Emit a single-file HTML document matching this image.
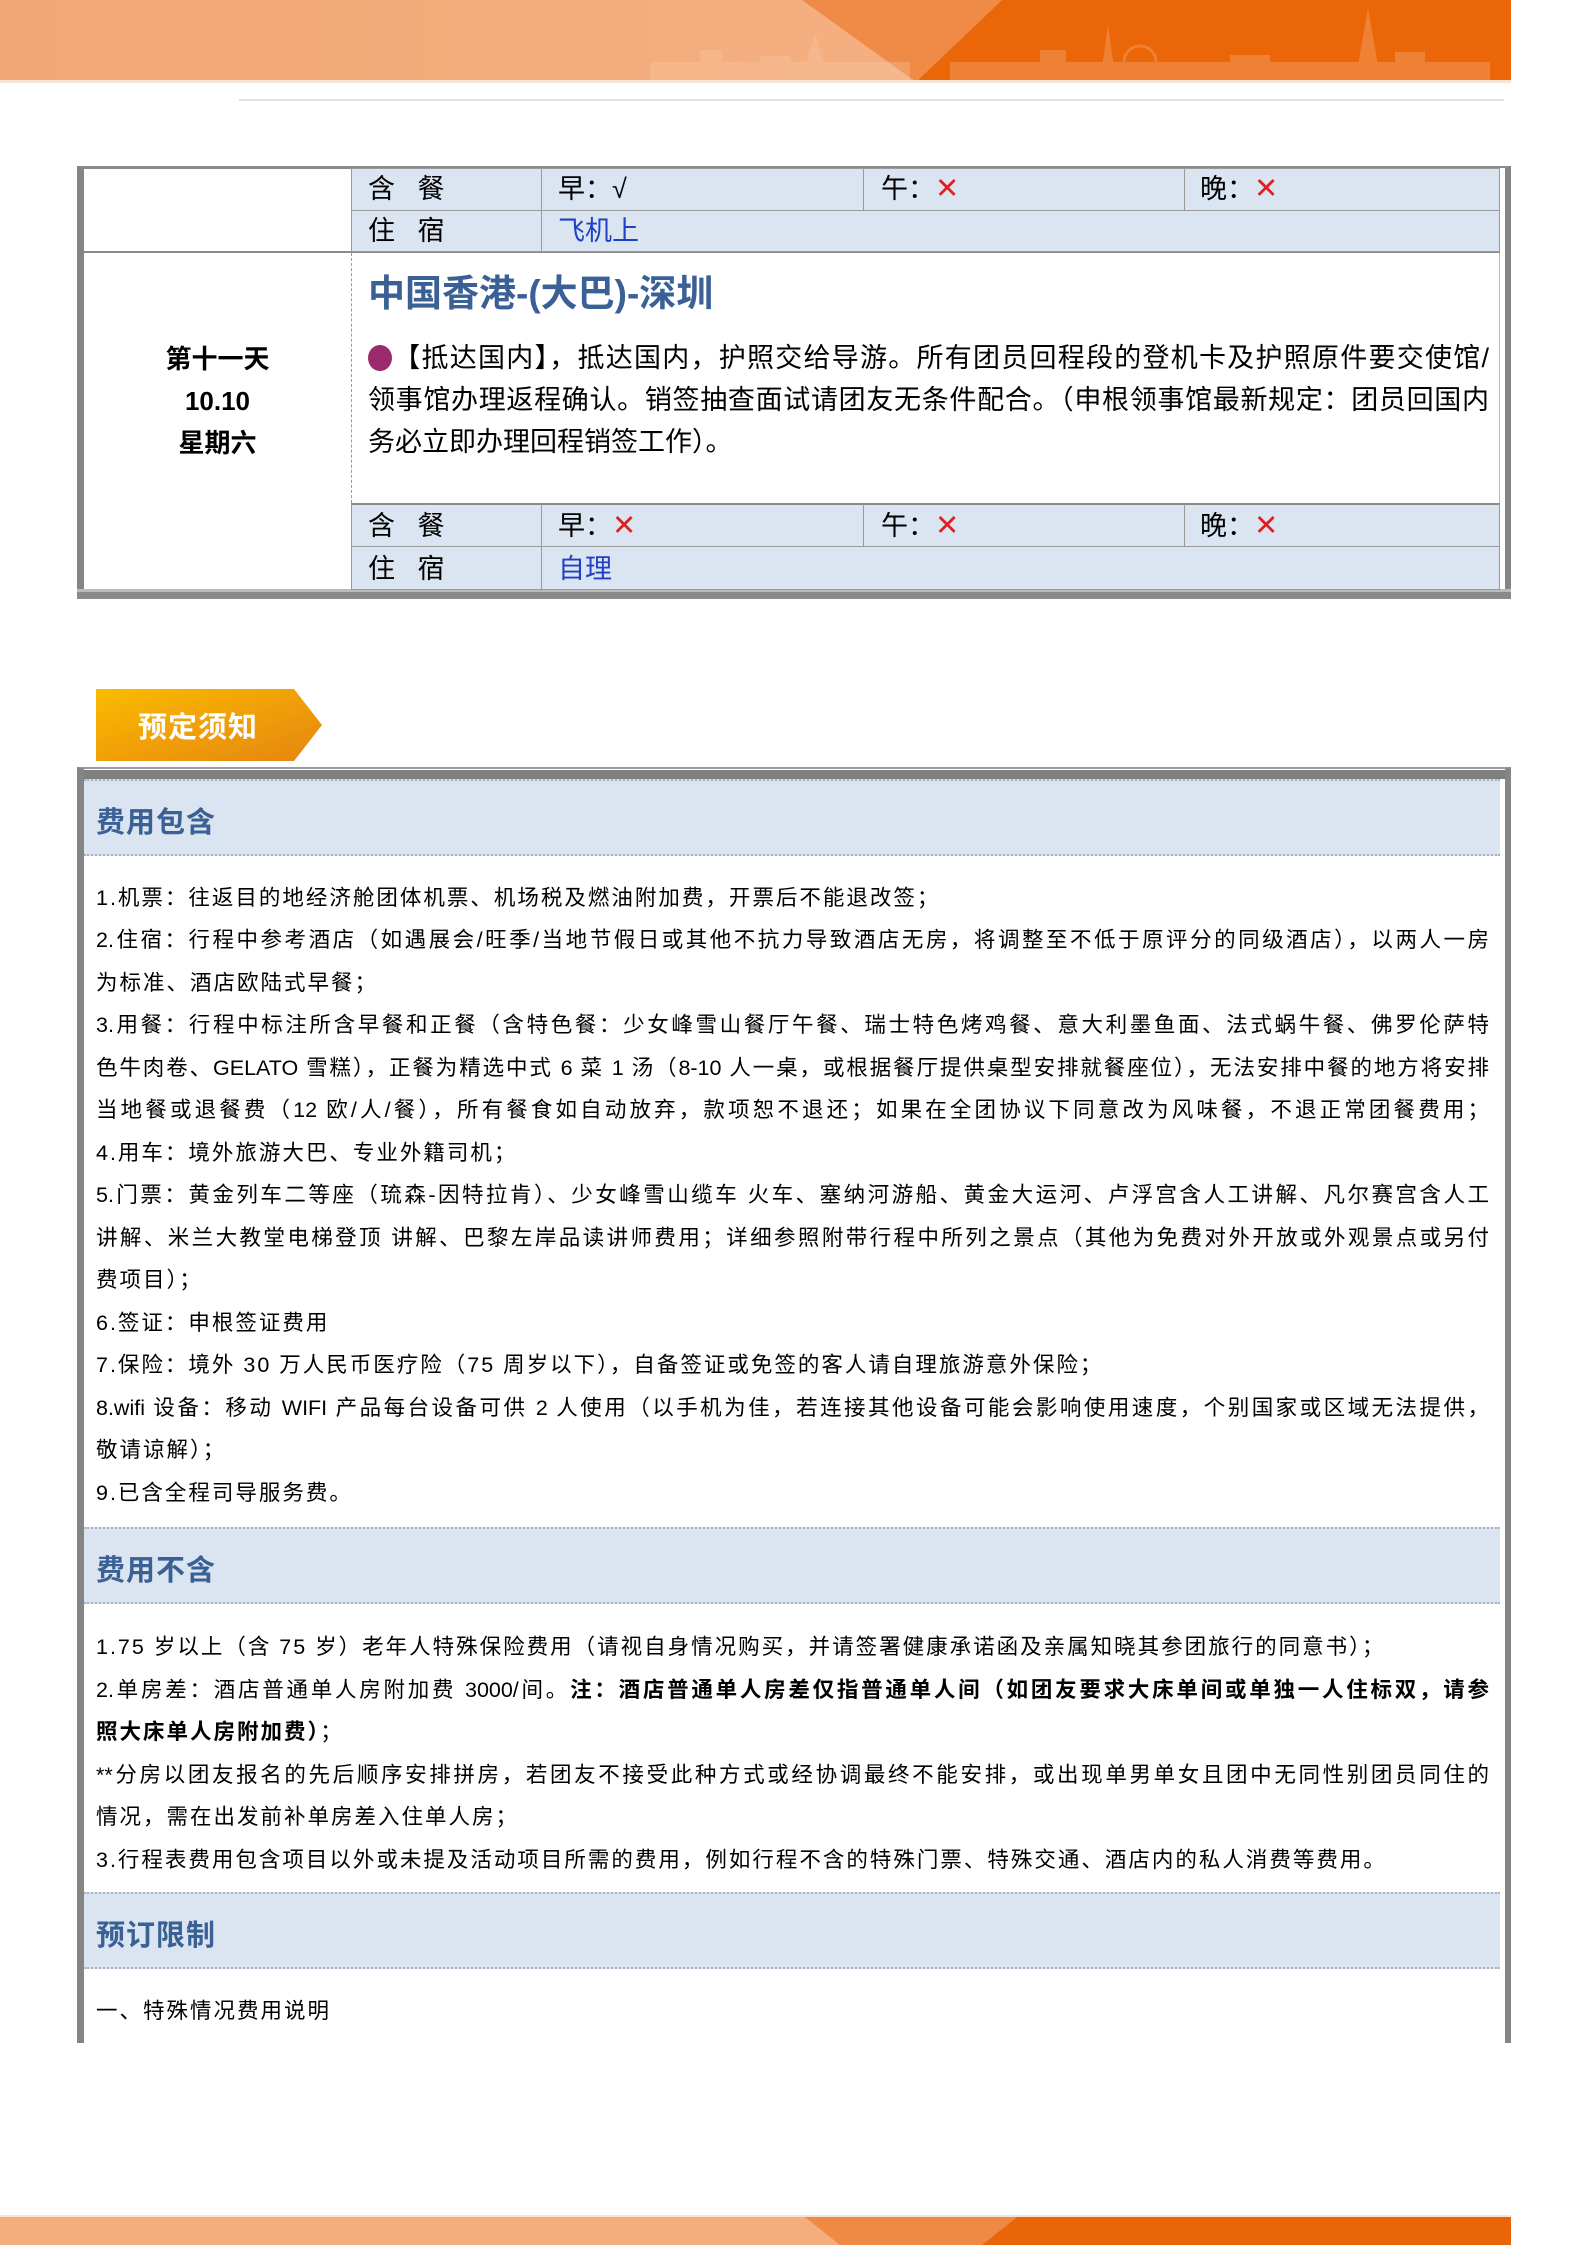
<!DOCTYPE html>
<html><head><meta charset="utf-8"><style>
*{margin:0;padding:0;box-sizing:border-box}
body{width:1587px;height:2245px;position:relative;background:#fff;font-family:"Liberation Sans","Noto Sans CJK SC",sans-serif;color:#000;overflow:hidden}
.a{position:absolute}
.cell{position:absolute;background:#dbe5f1;border:1px solid #9a9a9a}
.t{position:absolute;font-size:27px;line-height:40px;white-space:nowrap}
.x{color:#e02020;font-size:29px}
.ln{position:absolute;left:96px;width:1393px;font-size:21.5px;line-height:30px;white-space:nowrap;letter-spacing:2px}
.j{text-align:justify;text-align-last:justify;letter-spacing:0}
.hd{position:absolute;left:84px;width:1416px;background:#dbe5f1;border-top:2px dotted #a8b0bc;border-bottom:2px dotted #a8b0bc}
.hd span{position:absolute;left:12px;font-size:29px;font-weight:bold;color:#3a6095;letter-spacing:1px}
</style></head><body>
<svg class="a" style="left:0;top:0" width="1587" height="84">
<defs><linearGradient id="g1" x1="0" x2="1"><stop offset="0" stop-color="#f3a774"/><stop offset="1" stop-color="#f4b48a"/></linearGradient></defs>
<rect x="0" y="0" width="1511" height="82" fill="url(#g1)"/>
<polygon points="802,0 1002,0 916,82" fill="#ef8b47"/>
<polygon points="1002,0 1511,0 1511,82 916,82" fill="#ea6609"/>
<g fill="#fbd3b0" opacity="0.25">
<rect x="650" y="62" width="260" height="20"/><rect x="700" y="50" width="22" height="32"/><rect x="760" y="56" width="30" height="26"/><polygon points="800,82 815,35 830,82"/>
<rect x="950" y="62" width="540" height="20"/><polygon points="1100,82 1108,25 1116,82"/><circle cx="1140" cy="62" r="16" fill="none" stroke="#fbd3b0" stroke-width="3"/>
<polygon points="1355,82 1368,8 1381,82"/><rect x="1040" y="50" width="26" height="32"/><rect x="1230" y="55" width="40" height="27"/><rect x="1395" y="52" width="30" height="30"/>
</g>
<rect x="0" y="80" width="1511" height="3" fill="#f7e3d4"/>
</svg>
<div class="a" style="left:239px;top:99px;width:1265px;height:2px;background:#e2e2e2"></div>

<div class="a" style="left:77px;top:166px;width:1434px;height:433px;border-top:3px solid #8a8a8a;border-left:7px solid #858585;border-right:6px solid #858585;background:#fff"></div>
<div class="a" style="left:1499px;top:168px;width:6px;height:422px;background:#fff;border-left:1px solid #bbb"></div>
<div class="a" style="left:77px;top:589px;width:1434px;height:10px;background:#8a8a8a;border-top:3px solid #bbb"></div>
<div class="a" style="left:84px;top:251px;width:1416px;height:2px;background:#8a8a8a"></div>
<div class="a" style="left:351px;top:253px;height:250px;border-left:1px dashed #999"></div>
<div class="cell" style="left:351px;top:168px;width:191px;height:43px"></div>
<div class="cell" style="left:541px;top:168px;width:323px;height:43px"></div>
<div class="cell" style="left:863px;top:168px;width:322px;height:43px"></div>
<div class="cell" style="left:1184px;top:168px;width:316px;height:43px"></div>
<div class="cell" style="left:351px;top:210px;width:191px;height:42px"></div>
<div class="cell" style="left:541px;top:210px;width:959px;height:42px"></div>
<div class="cell" style="left:351px;top:503px;width:191px;height:44px;border-top:2px solid #8a8a8a"></div>
<div class="cell" style="left:541px;top:503px;width:323px;height:44px;border-top:2px solid #8a8a8a"></div>
<div class="cell" style="left:863px;top:503px;width:322px;height:44px;border-top:2px solid #8a8a8a"></div>
<div class="cell" style="left:1184px;top:503px;width:316px;height:44px;border-top:2px solid #8a8a8a"></div>
<div class="cell" style="left:351px;top:546px;width:191px;height:44px"></div>
<div class="cell" style="left:541px;top:546px;width:959px;height:44px"></div>
<div class="t" style="left:368px;top:169px">含&nbsp;&nbsp;&nbsp;餐</div>
<div class="t" style="left:558px;top:169px">早：√</div>
<div class="t" style="left:881px;top:169px">午：<span class="x">✕</span></div>
<div class="t" style="left:1200px;top:169px">晚：<span class="x">✕</span></div>
<div class="t" style="left:368px;top:211px">住&nbsp;&nbsp;&nbsp;宿</div>
<div class="t" style="left:558px;top:211px;color:#1f3fc4">飞机上</div>
<div class="t" style="left:368px;top:506px">含&nbsp;&nbsp;&nbsp;餐</div>
<div class="t" style="left:558px;top:506px">早：<span class="x">✕</span></div>
<div class="t" style="left:881px;top:506px">午：<span class="x">✕</span></div>
<div class="t" style="left:1200px;top:506px">晚：<span class="x">✕</span></div>
<div class="t" style="left:368px;top:549px">住&nbsp;&nbsp;&nbsp;宿</div>
<div class="t" style="left:558px;top:549px;color:#1f3fc4">自理</div>
<div class="t" style="left:368px;top:274px;font-size:37px;font-weight:bold;color:#3a6095">中国香港-(大巴)-深圳</div>
<div class="t" style="left:368px;top:338px;width:1121px;text-align:justify;text-align-last:justify"><span style="display:inline-block;width:24px;height:26px;border-radius:50%;background:#9b2a6e;vertical-align:-4px"></span>【抵达国内】，抵达国内，护照交给导游。所有团员回程段的登机卡及护照原件要交使馆/</div>
<div class="t" style="left:368px;top:380px;width:1121px;text-align:justify;text-align-last:justify">领事馆办理返程确认。销签抽查面试请团友无条件配合。（申根领事馆最新规定：团员回国内</div>
<div class="t" style="left:368px;top:422px">务必立即办理回程销签工作）。</div>
<div class="t" style="left:84px;width:267px;text-align:center;top:338px;font-size:26px;font-weight:bold;line-height:42px">第十一天<br>10.10<br>星期六</div>

<svg class="a" style="left:96px;top:689px" width="230" height="72">
<defs><linearGradient id="g2" x1="0" y1="0" x2="1" y2="1"><stop offset="0" stop-color="#fbbb00"/><stop offset="1" stop-color="#e58510"/></linearGradient></defs>
<polygon points="0,0 198,0 226,36 198,72 0,72" fill="url(#g2)"/>
</svg>
<div class="a" style="left:138px;top:704px;font-size:29px;font-weight:bold;color:#fff;letter-spacing:1px">预定须知</div>

<div class="a" style="left:77px;top:767px;width:1434px;height:1276px;border-top:2px solid #9a9a9a;border-left:7px solid #858585;border-right:6px solid #858585"></div>
<div class="a" style="left:84px;top:770px;width:1421px;height:9px;background:#7f7f7f"></div>
<div class="hd" style="top:779px;height:77px"><span style="top:18px">费用包含</span></div>
<div class="ln" style="top:883px">1.机票：往返目的地经济舱团体机票、机场税及燃油附加费，开票后不能退改签；</div>
<div class="ln j" style="top:925px">2.住宿：行程中参考酒店（如遇展会/旺季/当地节假日或其他不抗力导致酒店无房，将调整至不低于原评分的同级酒店），以两人一房</div>
<div class="ln" style="top:968px">为标准、酒店欧陆式早餐；</div>
<div class="ln j" style="top:1010px">3.用餐：行程中标注所含早餐和正餐（含特色餐：少女峰雪山餐厅午餐、瑞士特色烤鸡餐、意大利墨鱼面、法式蜗牛餐、佛罗伦萨特</div>
<div class="ln j" style="top:1053px">色牛肉卷、GELATO 雪糕），正餐为精选中式 6 菜 1 汤（8-10 人一桌，或根据餐厅提供桌型安排就餐座位），无法安排中餐的地方将安排</div>
<div class="ln j" style="top:1095px">当地餐或退餐费（12 欧/人/餐），所有餐食如自动放弃，款项恕不退还；如果在全团协议下同意改为风味餐，不退正常团餐费用；</div>
<div class="ln" style="top:1138px">4.用车：境外旅游大巴、专业外籍司机；</div>
<div class="ln j" style="top:1180px">5.门票：黄金列车二等座（琉森-因特拉肯）、少女峰雪山缆车 火车、塞纳河游船、黄金大运河、卢浮宫含人工讲解、凡尔赛宫含人工</div>
<div class="ln j" style="top:1223px">讲解、米兰大教堂电梯登顶 讲解、巴黎左岸品读讲师费用；详细参照附带行程中所列之景点（其他为免费对外开放或外观景点或另付</div>
<div class="ln" style="top:1265px">费项目）；</div>
<div class="ln" style="top:1308px">6.签证：申根签证费用</div>
<div class="ln" style="top:1350px">7.保险：境外 30 万人民币医疗险（75 周岁以下），自备签证或免签的客人请自理旅游意外保险；</div>
<div class="ln j" style="top:1393px">8.wifi 设备：移动 WIFI 产品每台设备可供 2 人使用（以手机为佳，若连接其他设备可能会影响使用速度，个别国家或区域无法提供，</div>
<div class="ln" style="top:1435px">敬请谅解）；</div>
<div class="ln" style="top:1478px">9.已含全程司导服务费。</div>

<div class="hd" style="top:1527px;height:77px"><span style="top:18px">费用不含</span></div>
<div class="ln" style="top:1632px">1.75 岁以上（含 75 岁）老年人特殊保险费用（请视自身情况购买，并请签署健康承诺函及亲属知晓其参团旅行的同意书）；</div>
<div class="ln j" style="top:1675px">2.单房差：酒店普通单人房附加费 3000/间。<b>注：酒店普通单人房差仅指普通单人间（如团友要求大床单间或单独一人住标双，请参</b></div>
<div class="ln" style="top:1717px"><b>照大床单人房附加费）</b>；</div>
<div class="ln j" style="top:1760px">**分房以团友报名的先后顺序安排拼房，若团友不接受此种方式或经协调最终不能安排，或出现单男单女且团中无同性别团员同住的</div>
<div class="ln" style="top:1802px">情况，需在出发前补单房差入住单人房；</div>
<div class="ln" style="top:1845px">3.行程表费用包含项目以外或未提及活动项目所需的费用，例如行程不含的特殊门票、特殊交通、酒店内的私人消费等费用。</div>

<div class="hd" style="top:1892px;height:77px"><span style="top:18px">预订限制</span></div>
<div class="ln" style="top:1996px">一、特殊情况费用说明</div>

<svg class="a" style="left:0;top:2215px" width="1587" height="30">
<rect x="0" y="0" width="1511" height="3" fill="#f7e3d4"/>
<rect x="0" y="2" width="1511" height="28" fill="#f4ad7c"/>
<polygon points="805,2 1017,2 982,30 840,30" fill="#ef8a45"/>
<polygon points="1017,2 1511,2 1511,30 982,30" fill="#ea6408"/>
</svg>
</body></html>
